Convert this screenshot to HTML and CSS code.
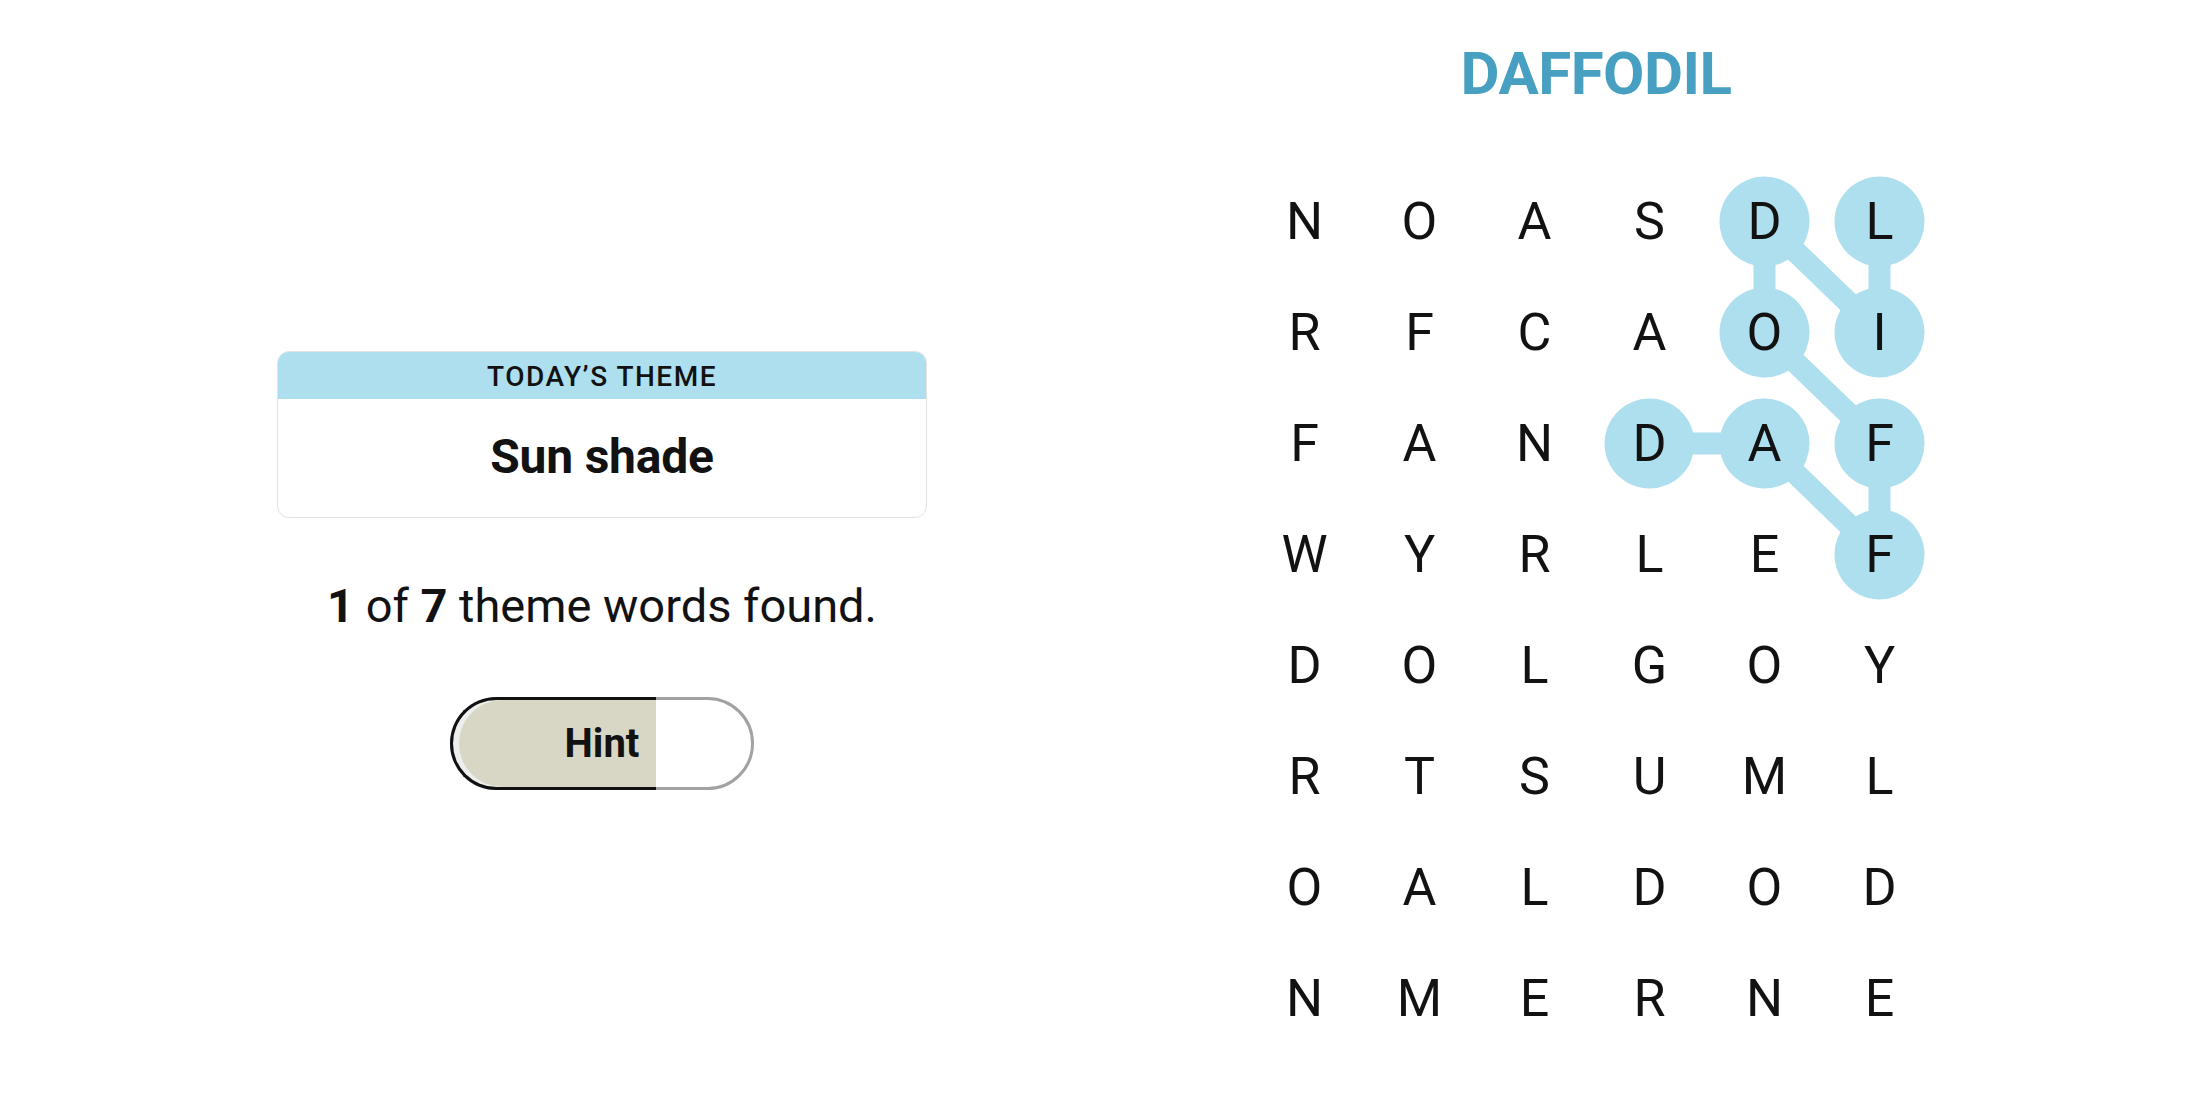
FILE: index.html
```html
<!DOCTYPE html>
<html lang="en">
<head>
<meta charset="utf-8">
<title>Strands</title>
<link rel="stylesheet" href="styles.css">
</head>
<body>
<div class="page">
  <section class="side">
    <div class="theme-card">
      <div class="theme-head">TODAY’S THEME</div>
      <div class="theme-body">Sun shade</div>
    </div>
    <p class="progress"><b>1</b> of <b>7</b> theme words found.</p>
    <button class="hint">
      <span class="hint-fill" style="width:206px"></span>
      <span class="hint-label">Hint</span>
    </button>
  </section>
  <section class="board">
    <h1 class="found-word">DAFFODIL</h1>
    <div class="grid-wrap">
      <svg class="paths" width="690" height="888" viewBox="0 0 690 888">
        <g stroke="#aedfee" stroke-width="22" stroke-linecap="round" stroke-linejoin="round" fill="none">
          <polyline points="402.5,277.5 517.5,277.5 632.5,388.5 632.5,277.5 517.5,166.5 517.5,55.5 632.5,166.5 632.5,55.5"/>
        </g>
        <g fill="#aedfee">
          <circle cx="402.5" cy="277.5" r="45"/>
          <circle cx="517.5" cy="277.5" r="45"/>
          <circle cx="632.5" cy="388.5" r="45"/>
          <circle cx="632.5" cy="277.5" r="45"/>
          <circle cx="517.5" cy="166.5" r="45"/>
          <circle cx="517.5" cy="55.5" r="45"/>
          <circle cx="632.5" cy="166.5" r="45"/>
          <circle cx="632.5" cy="55.5" r="45"/>
        </g>
      </svg>
      <div class="grid">
        <span>N</span><span>O</span><span>A</span><span>S</span><span>D</span><span>L</span>
        <span>R</span><span>F</span><span>C</span><span>A</span><span>O</span><span>I</span>
        <span>F</span><span>A</span><span>N</span><span>D</span><span>A</span><span>F</span>
        <span>W</span><span>Y</span><span>R</span><span>L</span><span>E</span><span>F</span>
        <span>D</span><span>O</span><span>L</span><span>G</span><span>O</span><span>Y</span>
        <span>R</span><span>T</span><span>S</span><span>U</span><span>M</span><span>L</span>
        <span>O</span><span>A</span><span>L</span><span>D</span><span>O</span><span>D</span>
        <span>N</span><span>M</span><span>E</span><span>R</span><span>N</span><span>E</span>
      </div>
    </div>
  </section>
</div>
</body>
</html>
```
FILE: styles.css
```css
html, body {
  margin: 0;
  padding: 0;
  background: #ffffff;
}
body {
  width: 2200px;
  height: 1100px;
  overflow: hidden;
  font-family: Roboto, "Liberation Sans", Arial, sans-serif;
  color: #121212;
}
.page {
  display: flex;
  align-items: flex-start;
}
.side {
  width: 1204px;
  padding-top: 351px;
  display: flex;
  flex-direction: column;
  align-items: center;
}
.theme-card {
  width: 650px;
  box-sizing: border-box;
  border: 1px solid #e2e2e2;
  border-radius: 12px;
  overflow: hidden;
  text-align: center;
}
.theme-head {
  height: 47px;
  box-sizing: border-box;
  padding-top: 3px;
  line-height: 44px;
  background: #aedfee;
  font-size: 28px;
  font-weight: 500;
  letter-spacing: 1.5px;
}
.theme-body {
  padding: 29px 0 32px;
  font-size: 48px;
  line-height: 57px;
  font-weight: 700;
  letter-spacing: -0.2px;
}
.progress {
  margin: 61px 0 0;
  font-size: 47px;
  line-height: 54px;
  font-weight: 400;
}
.progress b {
  font-weight: 700;
}
.hint {
  position: relative;
  margin-top: 64px;
  width: 304px;
  height: 93px;
  box-sizing: border-box;
  border: 3px solid #a2a2a2;
  border-radius: 47px;
  background: #ffffff;
  padding: 0;
  font-family: Roboto, "Liberation Sans", Arial, sans-serif;
  cursor: pointer;
}
.hint-fill {
  position: absolute;
  left: -3px;
  top: -3px;
  bottom: -3px;
  box-sizing: border-box;
  border: 3px solid #111111;
  border-right: none;
  border-radius: 47px 0 0 47px;
  background: #d8d7c5;
  box-shadow: inset 6px 0 0 #eeeeee;
}
.hint-label {
  position: relative;
  font-size: 40px;
  font-weight: 700;
  color: #121212;
  line-height: 87px;
}
.board {
  margin-left: 43px;
  width: 690px;
  display: flex;
  flex-direction: column;
  align-items: center;
}
.found-word {
  margin: 39px 0 0;
  padding-left: 8px;
  font-size: 60px;
  line-height: 70px;
  font-weight: 700;
  color: #479fc1;
  letter-spacing: -0.5px;
}
.grid-wrap {
  position: relative;
  margin-top: 57px;
  width: 690px;
  height: 888px;
}
.paths {
  position: absolute;
  left: 0;
  top: 0;
}
.grid {
  position: relative;
  display: grid;
  grid-template-columns: repeat(6, 115px);
  grid-template-rows: repeat(8, 111px);
}
.grid span {
  display: flex;
  align-items: center;
  justify-content: center;
  font-size: 52px;
  line-height: 111px;
  font-weight: 400;
  color: #121212;
}
```
